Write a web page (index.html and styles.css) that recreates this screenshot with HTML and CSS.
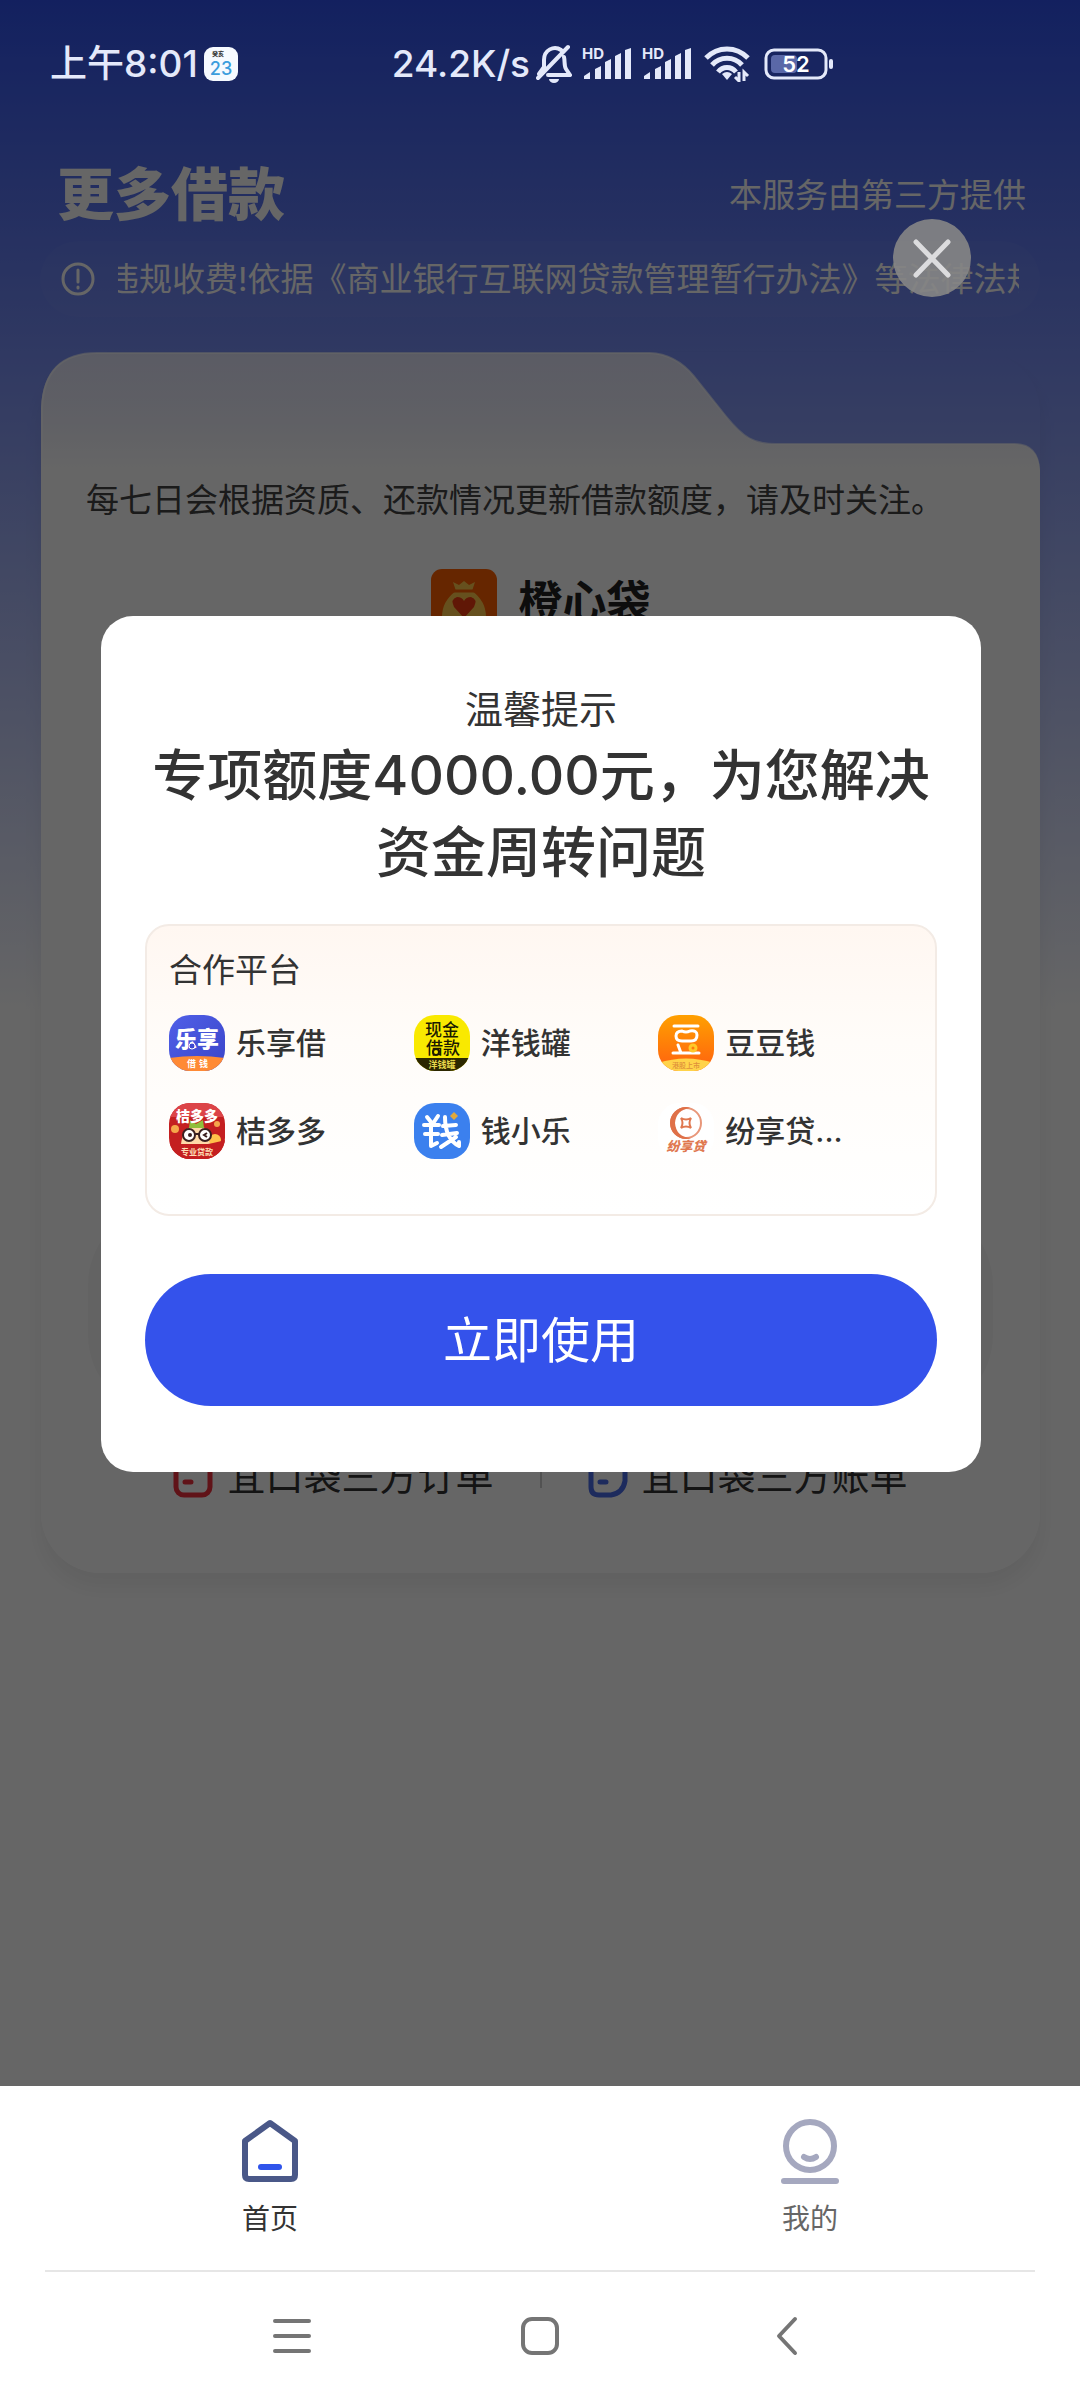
FILE: index.html
```html
<!DOCTYPE html>
<html lang="zh-CN">
<head>
<meta charset="utf-8">
<meta name="viewport" content="width=device-width, initial-scale=1">
<title>更多借款</title>
<link rel="stylesheet" href="styles.css">
</head>
<body>
<div class="screen">
  <main class="page">
    <div class="status-bar">
      <span class="status-time">上午8:01</span>
      <svg class="status-calendar" width="34" height="34" viewBox="0 0 34 34">
        <rect width="34" height="34" rx="9" fill="#f6faff"/>
        <text x="14" y="9" font-size="6" font-weight="700" text-anchor="middle" fill="#333">癸亥</text>
        <text x="17" y="28" font-size="18" text-anchor="middle" fill="#3b9ddd">23</text>
      </svg>
      <span class="status-speed">24.2K/s</span>
      <svg class="status-bell" width="36" height="40" viewBox="0 0 36 40" fill="none" stroke="#e4e9fa" stroke-width="4" stroke-linecap="round" stroke-linejoin="round">
        <path d="M25 6C18 1 8 6 8 16v7l-5 7M28 13c1 4 0 9 2 12l4 6H12M2 34L32 3"/>
        <path d="M13 35h10a5 4 0 0 1-10 0z" fill="#e4e9fa" stroke="none"/>
      </svg>
      <svg class="status-signal" width="50" height="40" viewBox="0 -3 50 40" fill="#e4e9fa">
        <text x="0" y="12" font-size="15" font-weight="700">HD</text>
        <path d="M2 32v-3l6-4v7zM13 32V22l6-3v13zM23 32V15l6-3v20zM33 32V9l6-3v26zM43 32V3l6-2v31z"/>
      </svg>
      <svg class="status-signal" width="50" height="40" viewBox="0 -3 50 40" fill="#e4e9fa">
        <text x="0" y="12" font-size="15" font-weight="700">HD</text>
        <path d="M2 32v-3l6-4v7zM13 32V22l6-3v13zM23 32V15l6-3v20zM33 32V9l6-3v26zM43 32V3l6-2v31z"/>
      </svg>
      <svg class="status-wifi" width="46" height="36" viewBox="0 0 46 36" fill="none" stroke="#e4e9fa" stroke-width="5">
        <path d="M2 12C14 0 32 0 44 12M8 19c8-9 22-9 30 0M14 26c5-6 13-6 18 0"/>
        <path d="M23 34l-5-6q5-4 10 0z" fill="#e4e9fa" stroke="none"/>
        <path d="M35 26v9l-4-4M40 35v-9l4 4" stroke-width="3"/>
      </svg>
      <svg class="status-battery" width="70" height="32" viewBox="0 0 70 32">
        <rect x="2" y="2" width="60" height="28" rx="8" fill="none" stroke="#e4e9fa" stroke-width="3"/>
        <rect x="7" y="7" width="26" height="18" rx="4" fill="#5a68a8"/>
        <rect x="65" y="11" width="4" height="10" rx="2" fill="#e4e9fa"/>
        <text x="32" y="24" font-size="22" font-weight="600" text-anchor="middle" fill="#fff">52</text>
      </svg>
    </div>

    <header class="page-header">
      <h1>更多借款</h1>
      <p>本服务由第三方提供</p>
    </header>

    <div class="notice">
      <svg width="34" height="34" viewBox="0 0 34 34" fill="none" stroke="#fff" stroke-width="3" stroke-linecap="round">
        <circle cx="17" cy="17" r="15"/><path d="M17 8v12"/><path d="M17 25v1"/>
      </svg>
      <div class="notice-track"><span>违规收费!依据《商业银行互联网贷款管理暂行办法》等法律法规</span></div>
    </div>

    <section class="card">
      <svg class="card-tab" viewBox="0 0 998 118" preserveAspectRatio="none">
        <defs>
          <linearGradient id="tabFill" x1="0" y1="0" x2="0" y2="1">
            <stop offset="0" stop-color="#e2e4fb"/><stop offset=".6" stop-color="#f0f1fc"/><stop offset="1" stop-color="#fff"/>
          </linearGradient>
        </defs>
        <path d="M0 118V56Q2 1 56 1H608Q634 2 652 24L684 64C702 86 712 92 734 92H972Q996 92 998 118Z" fill="url(#tabFill)"/>
        <path d="M1 118V56Q3 1 56 1H608Q634 2 652 24L684 64C702 86 712 92 734 92H972Q996 92 997 118" fill="none" stroke="#fff" stroke-opacity=".6" stroke-width="2"/>
      </svg>
      <div class="card-body">
        <p class="card-tip">每七日会根据资质、还款情况更新借款额度，请及时关注。</p>
        <div class="brand">
          <svg width="66" height="66" viewBox="0 0 66 66">
            <rect width="66" height="66" rx="11" fill="#ff6000"/>
            <path d="M22 13l6 3 5-4 5 4 6-3-3 9q14 10 14 26 0 12-12 12H23q-12 0-12-12 0-16 14-26z" fill="#ffc94d"/>
            <path d="M23 22h20" stroke="#ff6000" stroke-width="3"/>
            <path d="M33 49L23 38q-4-8 3-10 5 0 7 4 2-4 7-4 7 2 3 10z" fill="#f03a10"/>
          </svg>
          <h2>橙心袋</h2>
        </div>
        <div class="card-pill"></div>
        <div class="card-links">
          <a href="#orders">
            <svg width="40" height="44" viewBox="0 0 40 44" fill="none" stroke="#f0303c" stroke-width="5" stroke-linecap="round"><rect x="3" y="3" width="34" height="38" rx="8"/><path d="M12 15h16M12 28h6"/></svg>
            <span>宜口袋三方订单</span>
          </a>
          <i class="card-divider"></i>
          <a href="#bills">
            <svg width="40" height="44" viewBox="0 0 40 44" fill="none" stroke="#4a6be8" stroke-width="5" stroke-linecap="round"><path d="M11 3h18q8 0 8 8v16q-2 12-14 14H11q-8 0-8-8V11q0-8 8-8zM12 15h16M12 28h6"/></svg>
            <span>宜口袋三方账单</span>
          </a>
        </div>
      </div>
    </section>

    <div class="overlay">
      <button class="close" type="button" aria-label="关闭">
        <svg width="78" height="78" viewBox="0 0 78 78" fill="none" stroke="#dcdcde" stroke-width="5" stroke-linecap="round"><path d="M23 23l32 33M55 23L23 56"/></svg>
      </button>
      <section class="dialog" role="dialog" aria-labelledby="dialog-title">
        <p class="dialog-hint">温馨提示</p>
        <h2 class="dialog-title" id="dialog-title">专项额度4000.00元，为您解决资金周转问题</h2>
        <div class="partners">
          <h3>合作平台</h3>
          <ul>
            <li>
              <svg width="56" height="56" viewBox="0 0 56 56">
                <defs><clipPath id="appShape"><rect width="56" height="56" rx="21"/></clipPath>
                <linearGradient id="blueFill" x1="0" y1="0" x2="1" y2="1"><stop offset="0" stop-color="#5060e8"/><stop offset="1" stop-color="#3a44c8"/></linearGradient></defs>
                <g clip-path="url(#appShape)">
                  <rect width="56" height="56" fill="url(#blueFill)"/>
                  <path d="M0 43q28-4 56 0v13H0z" fill="#ff8a35"/>
                  <text x="28" y="32" font-size="22" font-weight="900" text-anchor="middle" fill="#fff">乐享</text>
                  <circle cx="23" cy="31" r="3" fill="#3f49d0" stroke="#fff"/>
                  <text x="18" y="52" font-size="9" font-weight="700" fill="#fff">借</text>
                  <text x="30" y="52" font-size="9" font-weight="700" fill="#fff">钱</text>
                </g>
              </svg>
              <span>乐享借</span>
            </li>
            <li>
              <svg width="56" height="56" viewBox="0 0 56 56">
                <g clip-path="url(#appShape)">
                  <rect width="56" height="56" fill="#f9e900"/>
                  <rect y="43" width="56" height="13" fill="#2c2700"/>
                  <text x="28" y="21" font-size="17" font-weight="500" text-anchor="middle" fill="#1c1a00">现金</text>
                  <text x="29" y="39" font-size="17" font-weight="500" text-anchor="middle" fill="#1c1a00">借款</text>
                  <circle cx="22" cy="37" r="3" fill="#f9e900" stroke="#1c1a00" stroke-width="2"/>
                  <text x="28" y="53" font-size="9" font-weight="700" text-anchor="middle" fill="#e8d84c">洋钱罐</text>
                </g>
              </svg>
              <span>洋钱罐</span>
            </li>
            <li>
              <svg width="56" height="56" viewBox="0 0 56 56">
                <defs><linearGradient id="orangeFill" x1="0" y1="0" x2="0" y2="1"><stop offset="0" stop-color="#ffa000"/><stop offset="1" stop-color="#ff6010"/></linearGradient></defs>
                <g clip-path="url(#appShape)">
                  <rect width="56" height="56" fill="url(#orangeFill)"/>
                  <path d="M0 48q28-9 56 0v8H0z" fill="#ffd34a"/>
                  <path d="M16 11h24M15 38h26M20 30l3 8" stroke="#fff" stroke-width="3" stroke-linecap="round"/>
                  <path d="M18 21q0-5 6-5 4 2 8 0 7-1 7 4 0 6-6 6H24q-6 0-6-5z" fill="none" stroke="#fff" stroke-width="3"/>
                  <circle cx="35" cy="33" r="3" fill="#ff7a10" stroke="#ffc928" stroke-width="3"/>
                  <text x="28" y="53" font-size="7" text-anchor="middle" fill="#e0903a">港股上市</text>
                </g>
              </svg>
              <span>豆豆钱</span>
            </li>
            <li>
              <svg width="56" height="56" viewBox="0 0 56 56">
                <g clip-path="url(#appShape)">
                  <rect width="56" height="56" fill="#c41f20"/>
                  <rect width="56" height="14" fill="#dc4448"/>
                  <circle cx="6" cy="26" r="4" fill="#f5a64a"/><circle cx="48" cy="21" r="3" fill="#f5a64a"/>
                  <path d="M12 41q2-17 15-19 14 1 17 19z" fill="#ffd9a8"/>
                  <circle cx="46" cy="37" r="6" fill="#ffc24a"/>
                  <path d="M20 25l1-8 6 4 7-4 1 8z" fill="#8fbe3a"/>
                  <circle cx="20" cy="32" r="6" fill="#fff" stroke="#3a2020" stroke-width="2"/>
                  <circle cx="36" cy="32" r="6" fill="#fff" stroke="#3a2020" stroke-width="2"/>
                  <path d="M26 31h4M38 30l-3 2 3 2" fill="none" stroke="#3a2020" stroke-width="2"/>
                  <circle cx="21" cy="32" r="2" fill="#3a2020"/>
                  <path d="M0 40q10 6 28 3t28-6v19H0z" fill="#c41f20"/>
                  <text x="28" y="18" font-size="14" font-weight="900" text-anchor="middle" fill="#fff">桔多多</text>
                  <text x="28" y="52" font-size="8" font-weight="700" text-anchor="middle" fill="#ffe0b8">专业贷款</text>
                </g>
              </svg>
              <span>桔多多</span>
            </li>
            <li>
              <svg width="56" height="56" viewBox="0 0 56 56">
                <g clip-path="url(#appShape)">
                  <rect width="56" height="56" fill="#3b80ee"/>
                  <path d="M13 14l4 5M24 13l-4 6M10 22h15M11 31h13M17 21v22l6-3M31 14q0 22 14 29v-4M29 23l13-1M28 32l15-2M42 34L27 44" fill="none" stroke="#fff" stroke-width="4" stroke-linecap="round" stroke-linejoin="round"/>
                  <path d="M40 9l4 4-4 4-4-4z" fill="#e0a83c"/>
                </g>
              </svg>
              <span>钱小乐</span>
            </li>
            <li>
              <svg width="56" height="56" viewBox="0 0 56 56">
                <rect width="56" height="56" rx="21" fill="#fff"/>
                <circle cx="28" cy="20" r="15" fill="none" stroke="#e8977a" stroke-width="2"/>
                <path d="M28 4a16 16 0 0 0 0 32q3 0 5-1-15-1-16-15Q18 7 32 5q-2-1-4-1z" fill="#df7048"/>
                <path d="M23 15q5 3 10 0-3 5 0 10-5-3-10 0 3-5 0-10z" fill="none" stroke="#e07850" stroke-width="2"/>
                <text x="28" y="48" font-size="13" font-weight="900" font-style="italic" text-anchor="middle" fill="#e07850">纷享贷</text>
              </svg>
              <span>纷享贷...</span>
            </li>
          </ul>
        </div>
        <button class="primary" type="button">立即使用</button>
      </section>
    </div>
  </main>

  <nav class="tabs">
    <a class="tab tab-active" href="#home">
      <svg width="66" height="66" viewBox="0 0 66 66" fill="none" stroke-width="6" stroke-linecap="round" stroke-linejoin="round">
        <path d="M33 4L58 22V56q0 4-4 4H12q-4 0-4-4V22z" stroke="#4a5888"/>
        <path d="M24 48h18" stroke="#2f54eb"/>
      </svg>
      <span>首页</span>
    </a>
    <a class="tab" href="#mine">
      <svg width="66" height="66" viewBox="0 0 66 66" fill="none" stroke="#a5a8bf" stroke-width="6" stroke-linecap="round">
        <circle cx="33" cy="27" r="24"/><path d="M27 38q6 4 12 0M7 62h52"/>
      </svg>
      <span>我的</span>
    </a>
  </nav>

  <div class="system-bar">
    <button type="button" aria-label="菜单"><svg width="40" height="40" viewBox="0 0 40 40" fill="none" stroke="#757575" stroke-width="4" stroke-linecap="round"><path d="M3 5h34M3 20h34M3 35h34"/></svg></button>
    <button type="button" aria-label="主屏幕"><svg width="40" height="40" viewBox="0 0 40 40" fill="none" stroke="#757575" stroke-width="4"><rect x="3" y="3" width="34" height="34" rx="9"/></svg></button>
    <button type="button" aria-label="返回"><svg width="40" height="40" viewBox="0 0 40 40" fill="none" stroke="#757575" stroke-width="4" stroke-linecap="round" stroke-linejoin="round"><path d="M27 3L11 20l16 17"/></svg></button>
  </div>
</div>
</body>
</html>
```
FILE: styles.css
```css
* { box-sizing: border-box; }

body,
h1, h2, h3,
p, ul {
  margin: 0;
  padding: 0;
}

body {
  font-family: Inter, "Noto Sans CJK SC", sans-serif;
  color: #333;
  background: #fff;
}

a { color: inherit; text-decoration: none; }

svg { display: block; flex: none; }

svg text { font-family: Inter, "Noto Sans CJK SC", sans-serif; }

button {
  margin: 0;
  padding: 0;
  border: 0;
  background: none;
  font: inherit;
  cursor: pointer;
}

.screen {
  display: flex;
  flex-direction: column;
  min-height: 100vh;
}

.page {
  position: relative;
  flex: 1;
  overflow: hidden;
  background: linear-gradient(#3052ee, #fff 1010px) #fff;
}

/* status bar stays above the dimming layer */
.status-bar {
  position: relative;
  z-index: 2;
  display: flex;
  align-items: center;
  height: 128px;
  padding: 0 50px;
  color: #e4e9fa;
  font-size: 37px;
  font-weight: 500;
  line-height: 48px;
  white-space: nowrap;
}

.status-calendar { margin-left: 6px; }
.status-speed { margin-left: auto; }
.status-bell { margin-left: 6px; }
.status-signal { margin-left: 10px; }
.status-wifi { margin-left: 12px; }
.status-battery { margin: 0 196px 0 14px; }

.page-header {
  display: flex;
  align-items: center;
  justify-content: space-between;
  height: 113px;
  padding: 20px 54px 0 57px;
  color: #fff;
}

.page-header h1 {
  font-size: 57px;
  font-weight: 900;
  line-height: 84px;
}

.page-header p {
  font-size: 33px;
  line-height: 48px;
}

.notice {
  display: flex;
  align-items: center;
  gap: 23px;
  height: 76px;
  margin: 0 40px;
  padding: 0 21px;
  border-radius: 38px;
  background: rgba(255, 255, 255, .03);
  color: #fff;
}

.notice-track {
  display: flex;
  flex: 1;
  min-width: 0;
  overflow: hidden;
  font-size: 33px;
  line-height: 48px;
  white-space: nowrap;
}

.notice-track span { margin-left: -12px; }

.card {
  margin: 35px 40px 0 41px;
  border-radius: 60px;
  box-shadow: 0 14px 20px rgba(0, 0, 0, .06);
}

.card-tab {
  width: 100%;
  height: 118px;
}

.card-body {
  padding: 6px 45px 72px;
  border-radius: 0 0 60px 60px;
  background: #fff;
}

.card-tip {
  font-size: 33px;
  line-height: 48px;
  color: #444;
}

.brand {
  display: flex;
  align-items: center;
  justify-content: center;
  gap: 22px;
  margin-top: 45px;
}

.brand h2 {
  font-size: 44px;
  font-weight: 700;
  line-height: 66px;
  color: #222;
}

.card-pill {
  height: 210px;
  margin: 570px 2px 0;
  border-radius: 80px;
  background: #f8f8f8;
}

.card-links {
  display: flex;
  align-items: center;
  justify-content: center;
  gap: 46px;
  margin-top: 36px;
}

.card-links a {
  display: flex;
  align-items: center;
  gap: 14px;
  font-size: 38px;
  line-height: 50px;
  color: #333;
}

.card-divider {
  width: 2px;
  height: 24px;
  background: #ccc;
}

.overlay {
  position: absolute;
  inset: 0;
  z-index: 1;
  display: flex;
  flex-direction: column;
  padding: 219px 99px 0 101px;
  background: rgba(0, 0, 0, .6);
}

.close {
  align-self: flex-end;
  margin-right: 10px;
  border-radius: 50%;
  background: rgba(134, 134, 134, .9);
}

.dialog {
  margin-top: 319px;
  padding: 68px 44px 66px;
  border-radius: 32px;
  background: #fff;
  text-align: center;
}

.dialog-hint {
  font-size: 38px;
  line-height: 50px;
}

.dialog-title {
  margin-top: 3px;
  font-size: 55px;
  font-weight: 500;
  line-height: 77px;
}

.partners {
  margin-top: 33px;
  padding: 22px 32px 55px 22px;
  border: 2px solid #f3ebe5;
  border-radius: 24px;
  background: linear-gradient(#fff7f1, #fffcf9 40%, #fff);
  text-align: left;
}

.partners h3 {
  font-size: 33px;
  font-weight: 400;
  line-height: 44px;
}

.partners ul {
  display: grid;
  grid-template-columns: repeat(3, 1fr);
  gap: 32px 0;
  margin-top: 23px;
  list-style: none;
}

.partners li {
  display: flex;
  align-items: center;
  gap: 11px;
  font-size: 30px;
  font-weight: 500;
  line-height: 44px;
  white-space: nowrap;
}

.primary {
  width: 100%;
  height: 132px;
  margin-top: 58px;
  padding-bottom: 8px;
  border-radius: 66px;
  background: #3452eb;
  color: #fff;
  font-size: 49px;
}

.tabs {
  display: grid;
  grid-template-columns: 1fr 1fr;
  height: 186px;
  padding-top: 33px;
  background: linear-gradient(#e6e6e6, #e6e6e6) center bottom / calc(100% - 90px) 2px no-repeat #fff;
}

.tab {
  display: flex;
  flex-direction: column;
  align-items: center;
  gap: 14px;
  font-size: 28px;
  line-height: 40px;
  color: #666;
}

.tab-active { color: #333; }

.system-bar {
  display: flex;
  justify-content: space-between;
  align-items: center;
  height: 128px;
  padding: 0 272px;
  background: #fff;
}
```
